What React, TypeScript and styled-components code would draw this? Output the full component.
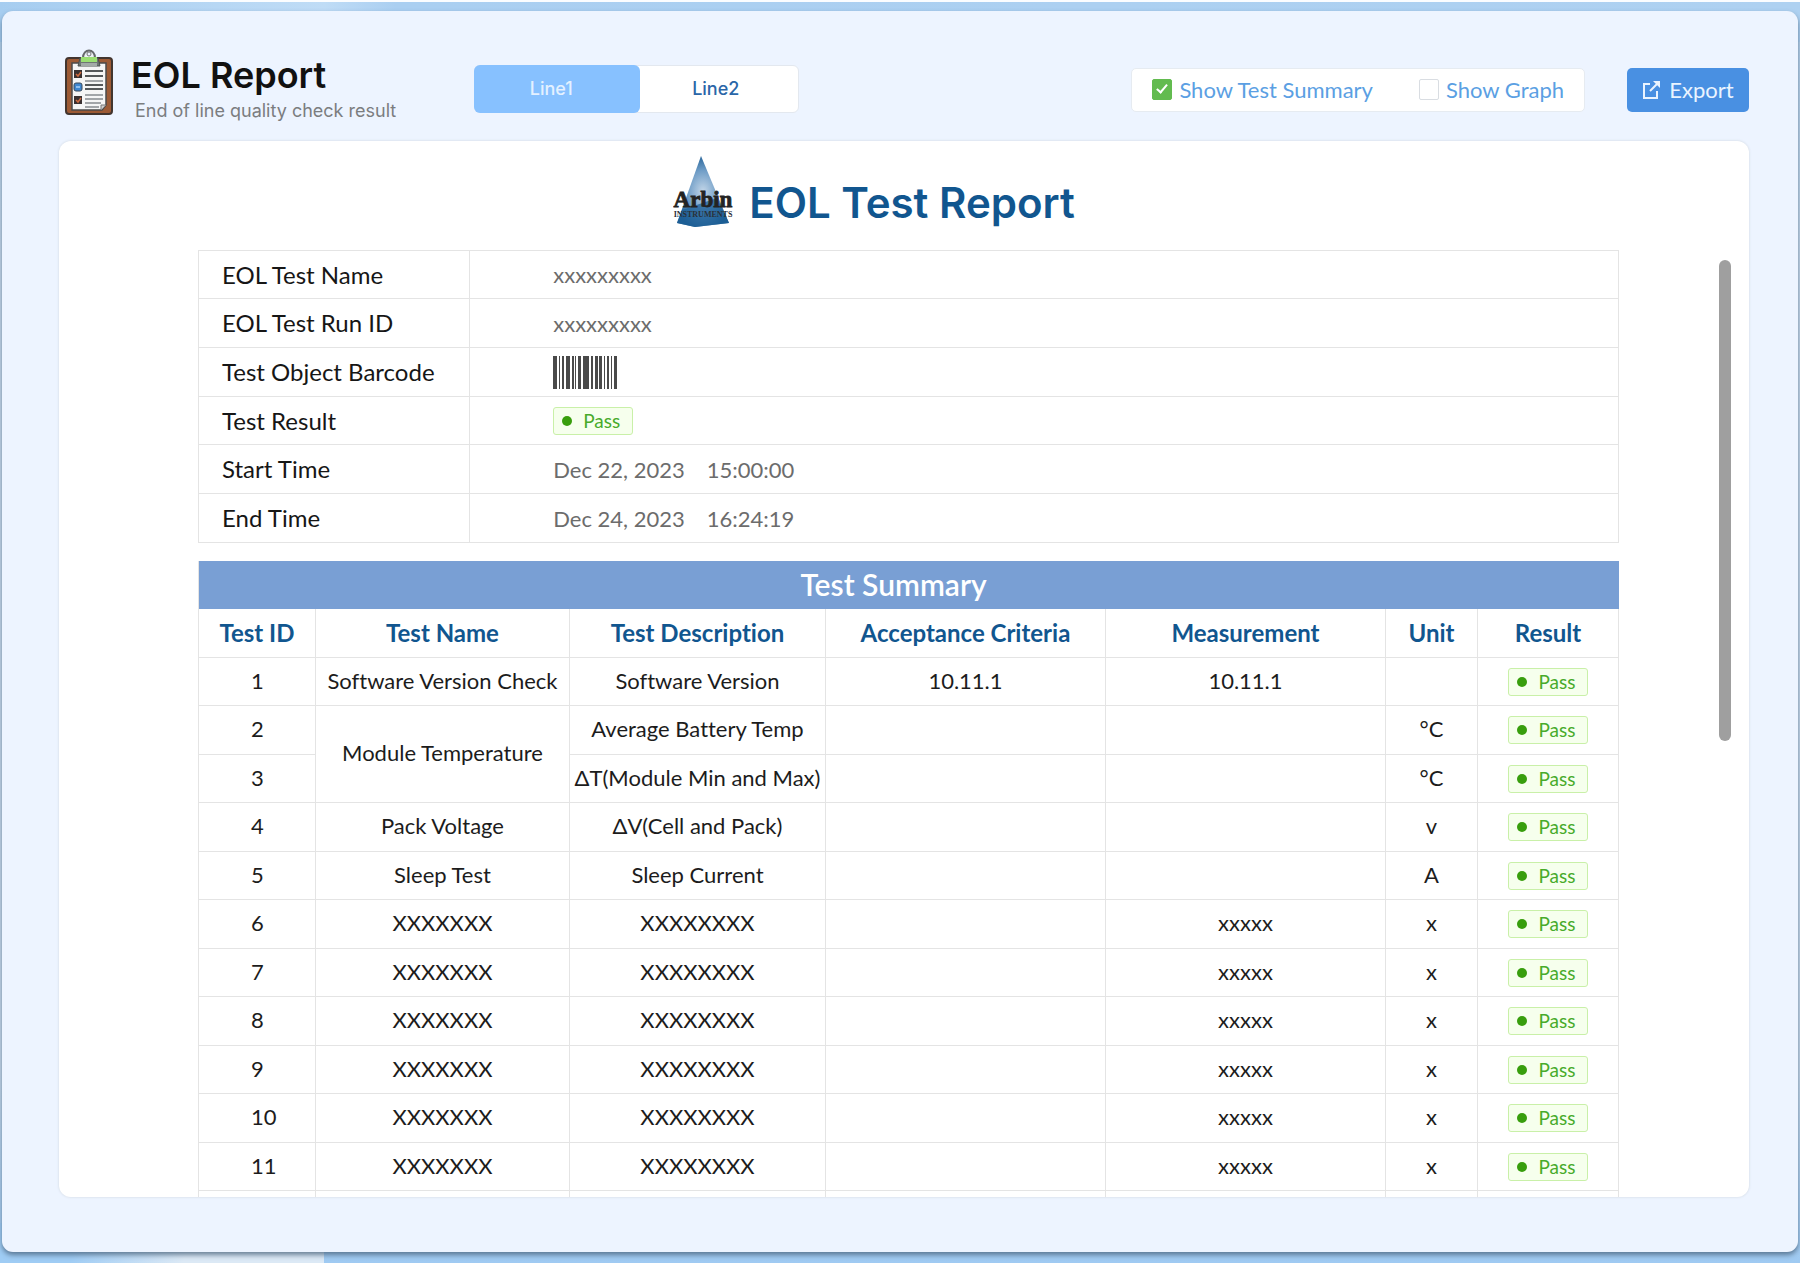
import React, { useState } from 'react';
import styled, { createGlobalStyle, css } from 'styled-components';

const bodyFont = '"Lato", "Open Sans", sans-serif';
const titleFont = '"Inter", "Roboto", sans-serif';
const line = '#e4e4e4';
const navy = '#11568f';

const GlobalStyle = createGlobalStyle`
  *, *::before, *::after { box-sizing: border-box; }
  body {
    margin: 0;
    font-family: ${bodyFont};
    font-variant-ligatures: none;
    color: #1c1c1c;
  }
  button, input { font: inherit; }
`;

const Page = styled.div`
  display: flex;
  height: 100vh;
  padding: 9px 2px 11px;
  border-top: 2px solid #fbfdff;
  background:
    linear-gradient(105deg, #9fccf4 0 24%, #dce9f5 58%) left bottom / 324px 40px no-repeat,
    linear-gradient(to right, #a6cdf0, #bfdcf6 18%, #aacff1 22%, #aed1f1) top / 100% 40px no-repeat,
    linear-gradient(to bottom, #b5d3ee, #c9dbec 20%, #c9dbec 85%, #9fcaf2);
`;

const Frame = styled.div`
  flex: 1;
  display: flex;
  flex-direction: column;
  min-width: 0;
  padding: 0 49px 55px 57px;
  border-radius: 11px;
  background: #edf4ff;
  box-shadow: 0 3px 5px rgba(70, 95, 120, 0.75);
`;

const Header = styled.header`
  display: flex;
  align-items: center;
  height: 130px;
  padding: 25px 0 0 6px;
`;

const Brand = styled.div`
  display: flex;
  align-items: center;
  gap: 18px;
  width: 409px;
  flex-shrink: 0;
`;

const BrandIcon = styled.svg`
  width: 48px;
  height: 66px;
  margin-bottom: 14px;
  flex-shrink: 0;
`;

const BrandText = styled.div`
  display: flex;
  flex-direction: column;
  gap: 4px;
`;

const PageTitle = styled.h1`
  margin: 0;
  font: 600 36px/40px ${titleFont};
  color: #111;
`;

const Subtitle = styled.p`
  margin: 0;
  padding-left: 4px;
  font: 400 18px/24px ${titleFont};
  color: #7b7d80;
`;

const Tabs = styled.div`
  display: flex;
  height: 48px;
  width: 325px;
  border: 1px solid #e3e8ef;
  border-radius: 6px;
  background: #fff;
`;

const Tab = styled.button<{ $active: boolean }>`
  flex: ${p => (p.$active ? '160' : '158')} 1 0;
  margin: ${p => (p.$active ? '-1px' : '0')};
  padding: 0 ${p => (p.$active ? '12px' : '6px')} 0 0;
  border: 0;
  border-radius: 6px;
  background: ${p => (p.$active ? '#87c1ff' : 'transparent')};
  color: ${p => (p.$active ? '#e4f1ff' : '#2a66a8')};
  font: 500 18px/24px ${titleFont};
  cursor: pointer;
`;

const Toggles = styled.div`
  display: flex;
  align-items: center;
  gap: 46px;
  height: 44px;
  margin: 2px 42px 0 auto;
  padding: 0 20px;
  border: 1px solid #e6ebf1;
  border-radius: 5px;
  background: #fff;
`;

const Toggle = styled.label`
  display: flex;
  align-items: center;
  gap: 7px;
  font-size: 22px;
  line-height: 28px;
  color: #5b9fe3;
  cursor: pointer;
`;

const Check = styled.input`
  appearance: none;
  position: relative;
  width: 20px;
  height: 21px;
  margin: 0;
  border: 1px solid #d9dde2;
  border-radius: 2px;
  background: #fff;

  &:checked {
    border-color: #62bb4f;
    background: #62bb4f;
  }

  &:checked::after {
    content: '';
    position: absolute;
    left: 6px;
    top: 2px;
    width: 6px;
    height: 11px;
    border: solid #fff;
    border-width: 0 2px 2px 0;
    transform: rotate(40deg);
  }
`;

const ExportButton = styled.button`
  display: flex;
  align-items: center;
  justify-content: center;
  gap: 8px;
  width: 122px;
  height: 44px;
  margin-top: 2px;
  border: 0;
  border-radius: 5px;
  background: #4990e2;
  color: #eaf4ff;
  font-size: 22px;
  line-height: 28px;
  cursor: pointer;
`;

const Card = styled.main`
  flex: 1;
  display: flex;
  flex-direction: column;
  min-height: 0;
  overflow: hidden;
  border-radius: 12px;
  background: #fff;
  box-shadow: 0 0 2px 1px #dfe6f0;
`;

const ReportHeading = styled.div`
  display: flex;
  align-items: flex-end;
  justify-content: center;
  gap: 16px;
  padding: 15px 60px 22px 0;
`;

const Logo = styled.svg`
  width: 60px;
  height: 72px;
`;

const ReportTitle = styled.h2`
  margin: 0;
  font: 600 42px/50px ${titleFont};
  color: ${navy};
`;

const ReportBody = styled.div`
  flex: 1;
  display: grid;
  grid-template-columns: minmax(0, 1fr) 130px;
  min-height: 0;
  padding-left: 139px;
`;

const Tables = styled.div`
  display: flex;
  flex-direction: column;
  gap: 18px;
  min-height: 0;
  overflow: hidden;
`;

const ScrollThumb = styled.div`
  justify-self: end;
  width: 12px;
  height: 481px;
  margin: 10px 18px 0 0;
  border-radius: 6px;
  background: #9f9f9f;
`;

const tableBase = css`
  width: 100%;
  table-layout: fixed;
  border-spacing: 0;
  border-left: 1px solid ${line};

  th, td {
    padding: 0 0 2px;
    border-right: 1px solid ${line};
    border-bottom: 1px solid ${line};
  }
`;

const InfoTable = styled.table`
  ${tableBase}
  border-top: 1px solid ${line};
`;

const InfoRow = styled.tr`
  height: 49px;
  &:nth-child(3n + 1) { height: 48px; }
`;

const InfoLabel = styled.th`
  && { padding: 0 0 0 23px; }
  text-align: left;
  font-size: 24px;
  line-height: 30px;
  font-weight: 400;
  color: #161616;
`;

const InfoValue = styled.td`
  && { padding: 1px 0 0 83px; }
  font-size: 22px;
  line-height: 28px;
  color: #6c6c6c;
`;

const Stamp = styled.span`
  display: flex;
  gap: 22px;
`;

const Barcode = styled.svg`
  display: block;
  width: 64px;
  height: 33px;
`;

const SummaryTable = styled.table`
  ${tableBase}
`;

const Banner = styled.th`
  height: 48px;
  && {
    padding-right: 30px;
    border-color: #799fd4;
  }
  background: #799fd4;
  color: #fff;
  font-size: 30px;
  line-height: 36px;
  font-weight: 600;
`;

const ColumnHead = styled.th`
  height: 49px;
  && { padding-bottom: 0; }
  color: ${navy};
  font-size: 24px;
  line-height: 30px;
  font-weight: 700;
`;

const Row = styled.tr`
  height: 48px;
  &:nth-child(even) { height: 49px; }
`;

const Cell = styled.td`
  text-align: center;
  font-size: 22px;
  line-height: 28px;
`;

const IdCell = styled(Cell)`
  && { padding-left: 52px; }
  text-align: left;
`;

const BadgeCell = styled(Cell)`
  && { padding: 0 0 0 1px; }
`;

const Badge = styled.span`
  display: flex;
  align-items: center;
  gap: 11px;
  width: 80px;
  height: 28px;
  padding-left: 8px;
  border: 1px solid #c9f0a8;
  border-radius: 3px;
  background: #f6ffed;
  color: #48ab2b;
  font-size: 19px;
  line-height: 24px;

  &::before {
    content: '';
    width: 10px;
    height: 10px;
    border-radius: 50%;
    background: #389e0d;
  }
`;

const BadgeSlot = styled.div`
  display: flex;
  justify-content: center;
`;

const PassBadge = () => <Badge>Pass</Badge>;

const ClipboardIcon = () => (
  <BrandIcon viewBox="0 0 48 66" aria-hidden="true">
    <rect x="1" y="9" width="46" height="56" rx="3" fill="#9c5a35" stroke="#42352f" strokeWidth="2" />
    <path d="M7 14H41V56L37 61H7Z" fill="#f5f5f5" stroke="#4a4a4a" strokeWidth="1.5" />
    <path d="M41 56H36V61" fill="#cfcfcf" stroke="#777" />
    <path d="M18 9C18 -1 30 -1 30 9" fill="#eef2f4" stroke="#66696b" strokeWidth="2" />
    <circle cx="24" cy="5" r="2" fill="#edf4ff" stroke="#777" />
    <path d="M15 9H33L35 17H13Z" fill="#6f7573" stroke="#4b504e" />
    <rect x="16" y="8" width="16" height="5" fill="#9bdf72" />
    <rect x="16" y="14" width="16" height="3" fill="#a3aaa6" />
    <rect x="9" y="21" width="8" height="8" fill="#3a3131" />
    <path d="M11 25l2 2 3-4" fill="none" stroke="#cf6b40" strokeWidth="1.5" />
    <rect x="9" y="34" width="8" height="8" rx="2" fill="#3f86cf" stroke="#39485a" />
    <path d="M11 38h4" stroke="#a9d2fb" strokeWidth="1.5" />
    <rect x="9" y="47" width="8" height="8" fill="#3a3131" />
    <path d="M11 51l2 2 3-4" fill="none" stroke="#cf6b40" strokeWidth="1.5" />
    <path d="M20 22H38M20 27H38M20 36H38M20 40H38" stroke="#55585a" strokeWidth="2" />
    <path d="M20 32H38M20 46H38M20 50H38M20 54H36M20 58H34" stroke="#a2a5a8" strokeWidth="2" />
  </BrandIcon>
);

const ArbinLogo = () => (
  <Logo viewBox="0 0 60 72" role="img" aria-label="Arbin Instruments">
    <defs>
      <radialGradient id="cone" cx="0.5" cy="0.5" r="0.55">
        <stop offset="0" stopColor="#c3d6e8" />
        <stop offset="0.55" stopColor="#6e9cc6" />
        <stop offset="1" stopColor="#17588f" />
      </radialGradient>
    </defs>
    <path d="M28 0L56 67L22 71L4 67Z" fill="url(#cone)" />
    <path d="M44 42L56 67L22 71L4 67L9 54Z" fill="#1f6097" opacity="0.75" />
    <text x="30" y="51" textAnchor="middle" fontFamily="Liberation Serif, serif" fontWeight="700" fontSize="23" fill="#232323" stroke="#232323" strokeWidth="0.8">Arbin</text>
    <text x="30" y="61" textAnchor="middle" fontFamily="Liberation Serif, serif" fontWeight="700" fontSize="8" fill="#2a3138">INSTRUMENTS</text>
  </Logo>
);

const ExportIcon = () => (
  <svg width="19" height="20" viewBox="0 0 19 20" fill="none" stroke="#eaf4ff" strokeWidth="2" aria-hidden="true">
    <path d="M8 4H2V18H15V11" />
    <path d="M8 11L15 4" />
    <path d="M11 1H18V8Z" fill="#eaf4ff" stroke="none" />
  </svg>
);

const bars = [[0, 4], [6, 1], [9, 2], [13, 4], [19, 2], [22, 1], [25, 3], [30, 6], [38, 2], [42, 3], [46, 3], [51, 1], [54, 2], [58, 1], [61, 3]];

const BarcodeImage = () => (
  <Barcode viewBox="0 0 64 33" role="img" aria-label="Barcode">
    {bars.map(([x, w]) => (
      <rect key={x} x={x} y="0" width={w} height="33" fill="#4a4a4a" />
    ))}
  </Barcode>
);

const info: [string, React.ReactNode][] = [
  ['EOL Test Name', 'xxxxxxxxx'],
  ['EOL Test Run ID', 'xxxxxxxxx'],
  ['Test Object Barcode', <BarcodeImage />],
  ['Test Result', <PassBadge />],
  ['Start Time', <Stamp><span>Dec 22, 2023</span><span>15:00:00</span></Stamp>],
  ['End Time', <Stamp><span>Dec 24, 2023</span><span>16:24:19</span></Stamp>],
];

const columns: [string, number][] = [
  ['Test ID', 117],
  ['Test Name', 254],
  ['Test Description', 256],
  ['Acceptance Criteria', 280],
  ['Measurement', 280],
  ['Unit', 92],
  ['Result', 141],
];
const totalWidth = columns.reduce((sum, [, w]) => sum + w, 0);

type Test = { name?: string; span?: number; desc: string; criteria?: string; measured?: string; unit?: string };

const placeholder: Test = { name: 'XXXXXXX', desc: 'XXXXXXXX', measured: 'xxxxx', unit: 'x' };
const tests: Test[] = [
  { name: 'Software Version Check', desc: 'Software Version', criteria: '10.11.1', measured: '10.11.1' },
  { name: 'Module Temperature', span: 2, desc: 'Average Battery Temp', unit: '°C' },
  { desc: 'ΔT(Module Min and Max)', unit: '°C' },
  { name: 'Pack Voltage', desc: 'ΔV(Cell and Pack)', unit: 'v' },
  { name: 'Sleep Test', desc: 'Sleep Current', unit: 'A' },
  ...Array.from({ length: 6 }, () => placeholder),
];

export default function App() {
  const [tab, setTab] = useState('Line1');
  const [summary, setSummary] = useState(true);
  const [graph, setGraph] = useState(false);

  return (
    <Page>
      <GlobalStyle />
      <Frame>
        <Header>
          <Brand>
            <ClipboardIcon />
            <BrandText>
              <PageTitle>EOL Report</PageTitle>
              <Subtitle>End of line quality check result</Subtitle>
            </BrandText>
          </Brand>
          <Tabs>
            {['Line1', 'Line2'].map(name => (
              <Tab key={name} type="button" aria-pressed={tab === name} $active={tab === name} onClick={() => setTab(name)}>
                {name}
              </Tab>
            ))}
          </Tabs>
          <Toggles>
            <Toggle>
              <Check type="checkbox" checked={summary} onChange={e => setSummary(e.target.checked)} />
              Show Test Summary
            </Toggle>
            <Toggle>
              <Check type="checkbox" checked={graph} onChange={e => setGraph(e.target.checked)} />
              Show Graph
            </Toggle>
          </Toggles>
          <ExportButton type="button">
            <ExportIcon />
            Export
          </ExportButton>
        </Header>

        <Card>
          <ReportHeading>
            <ArbinLogo />
            <ReportTitle>EOL Test Report</ReportTitle>
          </ReportHeading>
          <ReportBody>
            <Tables>
              <InfoTable>
                <colgroup>
                  <col width="19.1%" />
                  <col />
                </colgroup>
                <tbody>
                  {info.map(([label, value]) => (
                    <InfoRow key={label}>
                      <InfoLabel scope="row">{label}</InfoLabel>
                      <InfoValue>{value}</InfoValue>
                    </InfoRow>
                  ))}
                </tbody>
              </InfoTable>

              {summary && (
                <SummaryTable>
                  <colgroup>
                    {columns.map(([name, w]) => (
                      <col key={name} width={`${(w / totalWidth) * 100}%`} />
                    ))}
                  </colgroup>
                  <thead>
                    <tr>
                      <Banner colSpan={7}>Test Summary</Banner>
                    </tr>
                    <tr>
                      {columns.map(([name]) => (
                        <ColumnHead key={name} scope="col">{name}</ColumnHead>
                      ))}
                    </tr>
                  </thead>
                  <tbody>
                    {tests.map((t, i) => (
                      <Row key={i}>
                        <IdCell>{i + 1}</IdCell>
                        {t.name && <Cell rowSpan={t.span}>{t.name}</Cell>}
                        <Cell>{t.desc}</Cell>
                        <Cell>{t.criteria}</Cell>
                        <Cell>{t.measured}</Cell>
                        <Cell>{t.unit}</Cell>
                        <BadgeCell>
                          <BadgeSlot><PassBadge /></BadgeSlot>
                        </BadgeCell>
                      </Row>
                    ))}
                    <Row>
                      {columns.map(([name]) => <Cell key={name} />)}
                    </Row>
                  </tbody>
                </SummaryTable>
              )}
            </Tables>
            <ScrollThumb />
          </ReportBody>
        </Card>
      </Frame>
    </Page>
  );
}
